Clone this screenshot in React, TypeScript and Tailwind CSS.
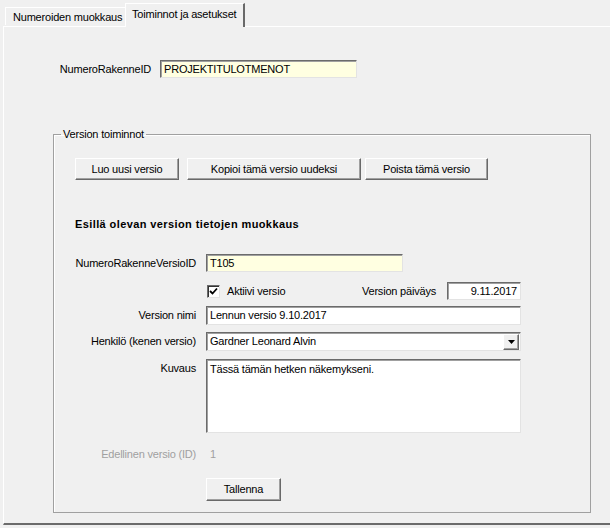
import React from "react";

const sunken =
  "border border-t-[#6b6b6b] border-l-[#6b6b6b] border-r-[#e3e3e3] border-b-[#e3e3e3] shadow-[inset_1px_1px_0_#a0a0a0]";
const raised =
  "border border-t-white border-l-white border-r-[#696969] border-b-[#696969] shadow-[inset_-1px_-1px_0_#a0a0a0] bg-[#f0f0f0]";

function Button({ label, w, h = "h-[22px]" }: { label: string; w: string; h?: string }) {
  return (
    <div className={`${raised} ${w} ${h} flex items-center justify-center shrink-0`}>
      {label}
    </div>
  );
}

function Label({ children, gray }: { children: React.ReactNode; gray?: boolean }) {
  return (
    <div className={`w-[142px] shrink-0 text-right ${gray ? "text-[#a0a0a0]" : ""}`}>{children}</div>
  );
}

export default function App() {
  return (
    <div
      className="w-[610px] h-[528px] bg-[#f0f0f0] text-[11px] leading-[13px] tracking-[-0.2px] text-black overflow-hidden whitespace-nowrap"
      style={{ fontFamily: '"Liberation Sans", Arial, sans-serif' }}
    >
      {/* tabs */}
      <div className="h-[26px] flex items-end pl-[5px]">
        <div className="h-[18px] w-[120px] pl-[7px] pt-[3px] border-l border-t border-white mb-[1px]">
          Numeroiden muokkaus
        </div>
        <div className="h-[24px] w-[120px] pl-[6px] pt-[4px] border-l border-t border-white border-r-2 border-r-[#696969] bg-[#f0f0f0] -mb-[1px] relative z-10">
          Toiminnot ja asetukset
        </div>
      </div>

      {/* panel */}
      <div className="ml-[3px] h-[499px] border-l border-t border-white border-b-2 border-b-[#6b6b6b]">
        <div className="flex items-center mt-[33px]">
          <div className="w-[147px] text-right">NumeroRakenneID</div>
          <div className={`ml-[9px] w-[197px] h-[18px] bg-[#ffffe1] pl-[3px] flex items-center ${sunken}`}>
            PROJEKTITULOTMENOT
          </div>
        </div>

        <fieldset className="mt-[50px] ml-[49px] w-[538px] h-[385px] border border-[#a0a0a0] shadow-[inset_1px_1px_0_white]">
          <legend className="ml-[7px] px-[2px]">Version toiminnot</legend>

          <div className="flex mt-[17px] ml-[21px]">
            <Button label="Luo uusi versio" w="w-[104px]" />
            <div className="w-[8px]" />
            <Button label="Kopioi tämä versio uudeksi" w="w-[174px]" />
            <div className="w-[4px]" />
            <Button label="Poista tämä versio" w="w-[123px]" />
          </div>

          <div className="ml-[21px] mt-[38px] font-bold tracking-[0.4px]">
            Esillä olevan version tietojen muokkaus
          </div>

          <div className="flex items-center mt-[23px]">
            <Label>NumeroRakenneVersioID</Label>
            <div className={`ml-[10px] w-[197px] h-[18px] bg-[#ffffe1] pl-[3px] flex items-center ${sunken}`}>
              T105
            </div>
          </div>

          <div className="flex items-center mt-[10px] h-[18px] w-[467px]">
            <div className="w-[142px] shrink-0" />
            <div className="ml-[11px] w-[13px] h-[13px] bg-white border border-t-[#6b6b6b] border-l-[#6b6b6b] border-r-[#e3e3e3] border-b-[#e3e3e3] shadow-[inset_1px_1px_0_#333] flex items-center justify-center">
              <svg width="9" height="9" viewBox="0 0 9 9">
                <path d="M1 4 L3.5 6.5 L8 1.5" stroke="#000" strokeWidth="1.8" fill="none" />
              </svg>
            </div>
            <div className="ml-[7px]">Aktiivi versio</div>
            <div className="ml-auto">Version päiväys</div>
            <div className={`ml-[11px] w-[74px] h-[18px] bg-white pr-[3px] flex items-center justify-end ${sunken}`}>
              9.11.2017
            </div>
          </div>

          <div className="flex items-center mt-[6px]">
            <Label>Version nimi</Label>
            <div className={`ml-[10px] w-[315px] h-[19px] bg-white pl-[3px] flex items-center ${sunken}`}>
              Lennun versio 9.10.2017
            </div>
          </div>

          <div className="flex items-center mt-[7px]">
            <Label>Henkilö (kenen versio)</Label>
            <div className={`ml-[10px] w-[315px] h-[19px] bg-white pl-[3px] flex items-center justify-between ${sunken}`}>
              <span>Gardner Leonard Alvin</span>
              <div className={`${raised} w-[16px] h-[16px] mr-[1px] flex items-center justify-center`}>
                <svg width="7" height="4" viewBox="0 0 7 4">
                  <path d="M0 0 H7 L3.5 4 Z" fill="#000" />
                </svg>
              </div>
            </div>
          </div>

          <div className="flex items-start mt-[8px]">
            <div className="pt-[3px]">
              <Label>Kuvaus</Label>
            </div>
            <div className={`ml-[10px] w-[315px] h-[74px] bg-white pl-[3px] pt-[3px] ${sunken}`}>
              Tässä tämän hetken näkemykseni.
            </div>
          </div>

          <div className="flex items-center mt-[15px]">
            <Label gray>Edellinen versio (ID)</Label>
            <div className="ml-[14px] text-[#a0a0a0]">1</div>
          </div>

          <div className="flex mt-[17px]">
            <div className="w-[142px] shrink-0" />
            <div className="ml-[10px]">
              <Button label="Tallenna" w="w-[75px]" h="h-[23px]" />
            </div>
          </div>
        </fieldset>
      </div>
    </div>
  );
}
